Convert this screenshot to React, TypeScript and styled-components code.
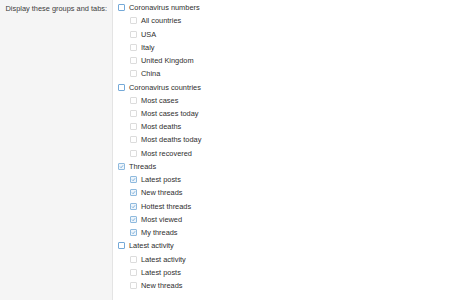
import React from 'react'
import styled, { createGlobalStyle } from 'styled-components'

const GlobalStyle = createGlobalStyle`
    html, body {
        margin: 0;
        padding: 0;
        background: #fff;
    }
    body {
        font-family: "Liberation Sans", Arial, Helvetica, sans-serif;
        font-size: 7.4px;
        color: #2e2e2e;
    }
`

const FormRow = styled.div`
    display: flex;
    width: 468px;
    height: 300px;
`

const LabelCell = styled.div`
    flex: 0 0 113px;
    background: #f5f5f5;
    border-right: 1px solid #e4e4e4;
    text-align: right;
    padding: 4px 5px 0 0;
    box-sizing: border-box;
    color: #3c3c3c;
`

const InputCell = styled.div`
    flex: 1 1 auto;
    padding: 1px 0 0 5px;
`

const Group = styled.div`
    display: flex;
    flex-direction: column;
`

const Row = styled.label<{ $nested?: boolean }>`
    display: flex;
    align-items: center;
    height: 13.24px;
    padding-left: ${p => (p.$nested ? '12px' : '0')};
    white-space: nowrap;
`

const Box = styled.span<{ $checked?: boolean; $group?: boolean }>`
    flex: 0 0 7px;
    width: 7px;
    height: 7px;
    box-sizing: border-box;
    margin-right: 4px;
    border: 1px solid
        ${p => (p.$checked ? '#8fbade' : p.$group ? '#74a9d8' : '#dcdcdc')};
    background: ${p => (p.$checked ? '#eef5fb' : '#fff')};
    border-radius: 1px;
    display: flex;
    align-items: center;
    justify-content: center;
`

const Check = () => (
    <svg width="5" height="5" viewBox="0 0 10 10">
        <path d="M2 5.2 L4.2 7.4 L8.2 2.6" fill="none" stroke="#4f94cf" strokeWidth="1.4" />
    </svg>
)

interface Section {
    title: string
    checked: boolean
    items: string[]
}

const sections: Section[] = [
    {
        title: 'Coronavirus numbers',
        checked: false,
        items: ['All countries', 'USA', 'Italy', 'United Kingdom', 'China'],
    },
    {
        title: 'Coronavirus countries',
        checked: false,
        items: ['Most cases', 'Most cases today', 'Most deaths', 'Most deaths today', 'Most recovered'],
    },
    {
        title: 'Threads',
        checked: true,
        items: ['Latest posts', 'New threads', 'Hottest threads', 'Most viewed', 'My threads'],
    },
    {
        title: 'Latest activity',
        checked: false,
        items: ['Latest activity', 'Latest posts', 'New threads'],
    },
]

const App = () => (
    <>
        <GlobalStyle />
        <FormRow>
            <LabelCell>Display these groups and tabs:</LabelCell>
            <InputCell>
                {sections.map((s, i) => (
                    <Group key={`${s.title}-${i}`}>
                        <Row>
                            <Box $group $checked={s.checked}>{s.checked && <Check />}</Box>
                            {s.title}
                        </Row>
                        {s.items.map((item, j) => (
                            <Row $nested key={`${item}-${j}`}>
                                <Box $checked={s.checked}>{s.checked && <Check />}</Box>
                                {item}
                            </Row>
                        ))}
                    </Group>
                ))}
            </InputCell>
        </FormRow>
    </>
)

export default App
